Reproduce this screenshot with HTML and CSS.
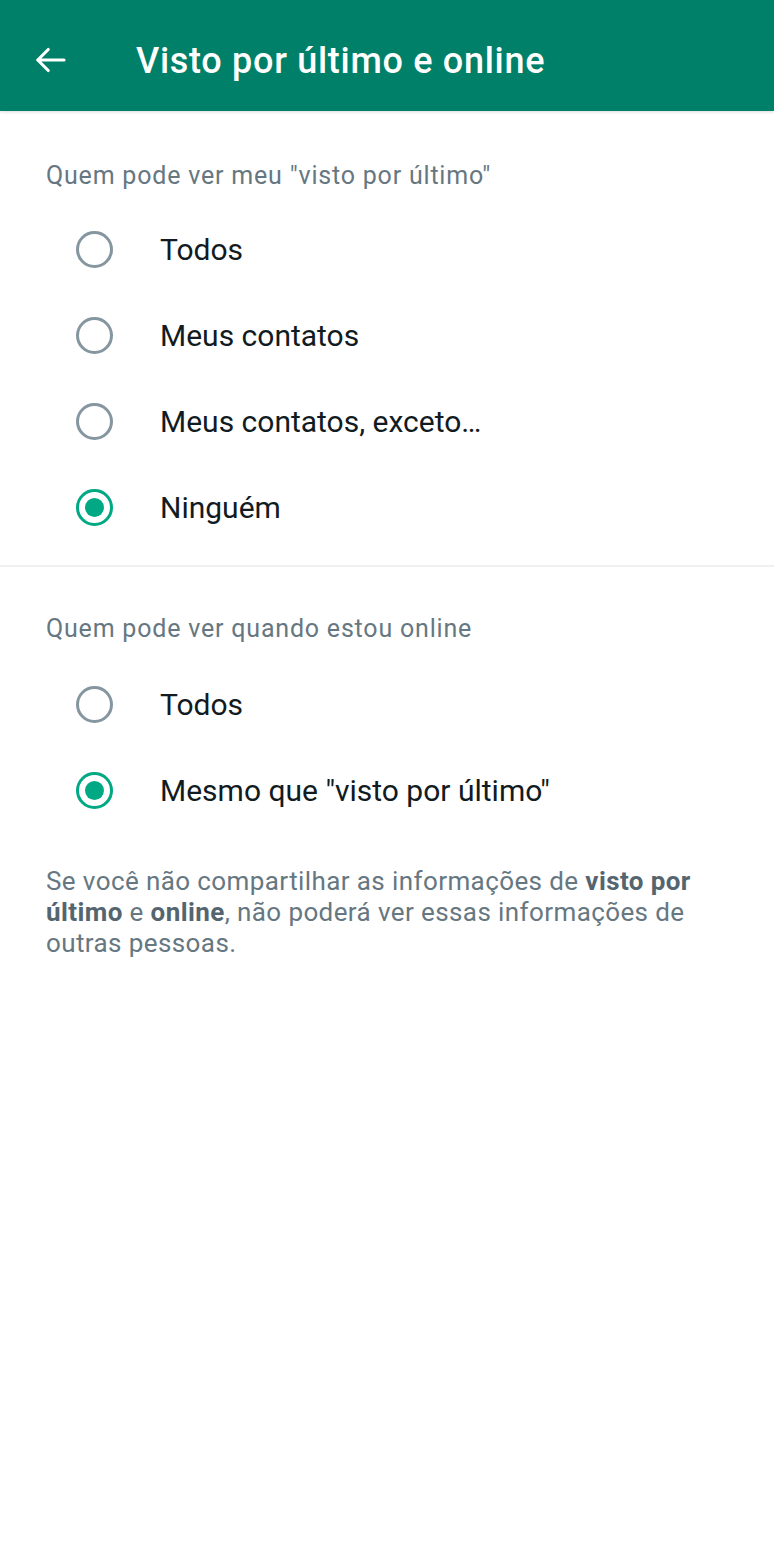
FILE: index.html
```html
<!DOCTYPE html>
<html lang="pt-BR">
<head>
    <meta charset="UTF-8">
    <meta name="viewport" content="width=device-width, initial-scale=1.0">
    <title>Visto por último e online</title>
    <link rel="stylesheet" href="styles.css">
</head>
<body>
    <div class="app-bar">
        <button class="back-btn" aria-label="Voltar">
            <svg width="36" height="36" viewBox="0 0 24 24" fill="none" stroke="currentColor" stroke-width="2.1" stroke-linecap="round" stroke-linejoin="round">
                <path d="M22 12H4.5M11.5 5l-7 7 7 7"/>
            </svg>
        </button>
        <h1 class="title">Visto por último e online</h1>
    </div>

    <div class="section">
        <h2 class="section-title">Quem pode ver meu "visto por último"</h2>
        <label class="option">
            <span class="radio"></span>
            <span class="option-label">Todos</span>
        </label>
        <label class="option">
            <span class="radio"></span>
            <span class="option-label">Meus contatos</span>
        </label>
        <label class="option">
            <span class="radio"></span>
            <span class="option-label">Meus contatos, exceto…</span>
        </label>
        <label class="option">
            <span class="radio checked"></span>
            <span class="option-label">Ninguém</span>
        </label>
    </div>

    <div class="divider"></div>

    <div class="section section-second">
        <h2 class="section-title">Quem pode ver quando estou online</h2>
        <label class="option">
            <span class="radio"></span>
            <span class="option-label">Todos</span>
        </label>
        <label class="option">
            <span class="radio checked"></span>
            <span class="option-label">Mesmo que "visto por último"</span>
        </label>
    </div>

    <p class="note">
        Se você não compartilhar as informações de <strong>visto por último</strong> e <strong>online</strong>, não poderá ver essas informações de outras pessoas.
    </p>
</body>
</html>
```

FILE: styles.css
```css
:root {
    --wa-green: #008069;
    --wa-accent: #00a884;
    --color-text: #111b21;
    --color-muted: #667781;
    --radio-off: #8696a0;
    --divider: #eef0f2;
}

* {
    margin: 0;
    padding: 0;
    box-sizing: border-box;
    font-family: Roboto, "Noto Sans", sans-serif;
}

body {
    background-color: #ffffff;
    color: var(--color-text);
    width: 774px;
    min-height: 1549px;
}

.app-bar {
    height: 111px;
    background-color: var(--wa-green);
    display: flex;
    align-items: center;
    color: #ffffff;
    box-shadow: 0 1px 3px rgba(0, 0, 0, 0.15);
}

.back-btn {
    background: none;
    border: none;
    color: #ffffff;
    width: 136px;
    padding-left: 31px;
    display: flex;
    align-items: center;
    margin-top: 8px;
}

.title {
    font-size: 36px;
    font-weight: 500;
    letter-spacing: 0.7px;
    margin-top: 10px;
}

.section {
    padding-top: 50px;
    padding-bottom: 15px;
}

.section-second {
    padding-top: 47px;
    padding-bottom: 0;
}

.section-title {
    font-size: 25px;
    font-weight: 400;
    letter-spacing: 0.8px;
    line-height: 30px;
    color: var(--color-muted);
    padding: 0 46px;
    margin-bottom: 15px;
}

.section-second .section-title {
    margin-bottom: 17px;
}

.option {
    height: 86px;
    display: flex;
    align-items: center;
    padding-left: 76px;
    cursor: pointer;
}

.radio {
    width: 37px;
    height: 37px;
    border: 3px solid var(--radio-off);
    border-radius: 50%;
    display: flex;
    align-items: center;
    justify-content: center;
    flex-shrink: 0;
}

.radio.checked {
    border-color: var(--wa-accent);
}

.radio.checked::after {
    content: "";
    width: 19px;
    height: 19px;
    border-radius: 50%;
    background-color: var(--wa-accent);
}

.option-label {
    margin-left: 47px;
    font-size: 30px;
    color: var(--color-text);
}

.divider {
    height: 2px;
    background-color: var(--divider);
}

.note {
    padding: 33px 60px 0 46px;
    font-size: 26px;
    letter-spacing: 0.4px;
    line-height: 31px;
    color: var(--color-muted);
}

.note strong {
    font-weight: 700;
    color: #54656f;
}
```
